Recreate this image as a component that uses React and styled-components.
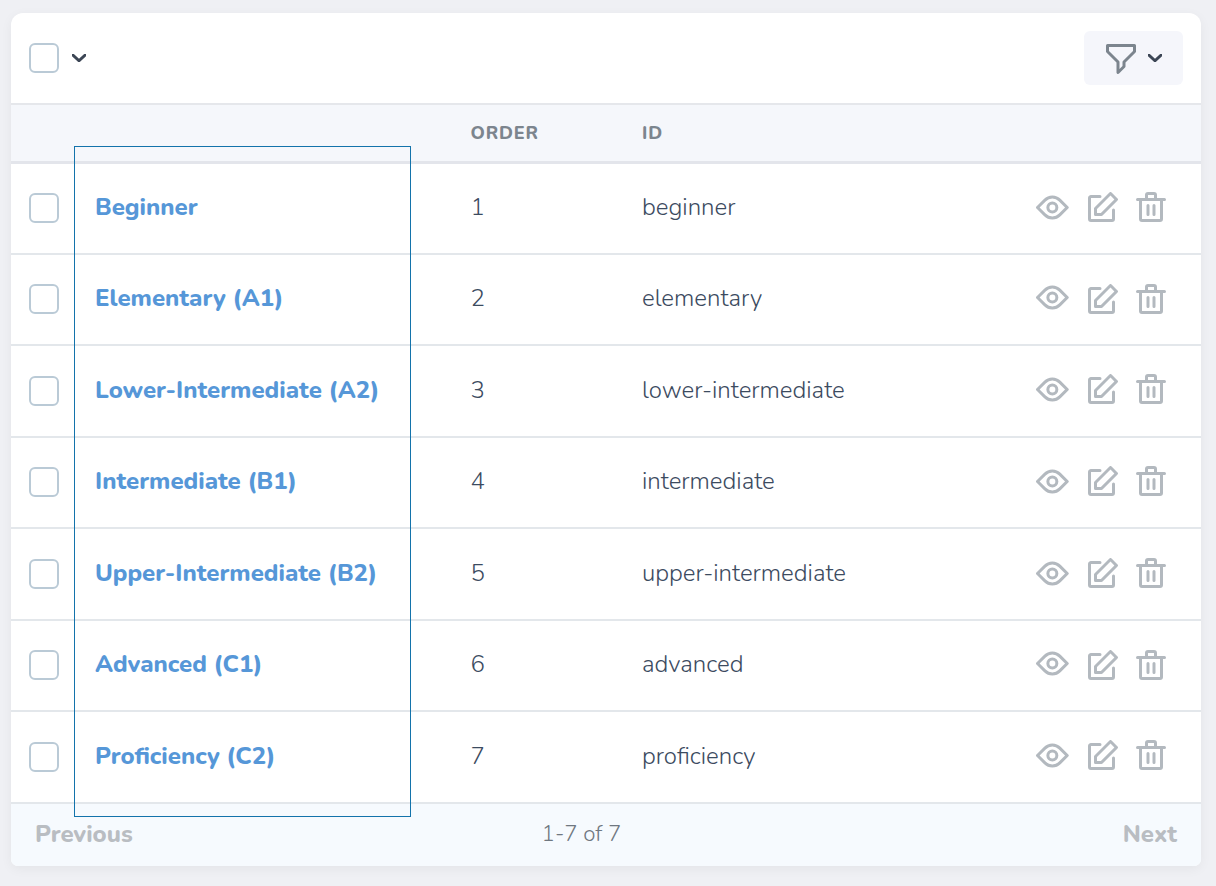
import React from "react";
import styled, { createGlobalStyle } from "styled-components";

const GlobalStyle = createGlobalStyle`
  *, *::before, *::after { box-sizing: border-box; }
  body {
    margin: 0;
    background: #eff0f4;
    font-family: Nunito, "Open Sans", sans-serif;
    font-size: 24px;
    font-weight: 300;
    color: #3c4b5f;
    overflow: hidden;
  }
`;

const Page = styled.main`
  position: relative;
  height: 886px;
  padding: 13px 15px 20px 11px;
`;

const Card = styled.section`
  display: flex;
  flex-direction: column;
  height: 853px;
  border-radius: 12px 12px 7px 7px;
  background: #fff;
  box-shadow: 0 3px 12px rgba(0, 0, 0, 0.05);
  overflow: hidden;
`;

const Toolbar = styled.header`
  display: flex;
  align-items: center;
  height: 90px;
  padding: 0 18px;
`;

const Checkbox = styled.span`
  flex: none;
  width: 30px;
  height: 30px;
  border: 2px solid #bacad6;
  border-radius: 6px;
  background: #fff;
`;

const Arrow = styled.svg`
  flex: none;
  width: 14px;
  height: 8px;
  margin-left: ${(p) => p.$gap}px;
  fill: #3c4655;
`;

const FilterButton = styled.button`
  display: flex;
  align-items: center;
  width: 99px;
  height: 54px;
  margin-left: auto;
  padding: 0 0 0 22px;
  border: 0;
  border-radius: 6px;
  background: #f5f6fb;
`;

const FilterGlyph = styled.svg`
  width: 30px;
  height: 30px;
  margin-top: 2px;
  fill: #7c858e;
`;

const columns = "84px 375.5px 171.5px 1fr auto";

const HeadRow = styled.div`
  display: grid;
  grid-template-columns: ${columns};
  align-items: center;
  height: 61px;
  border-top: 2px solid #e5e7eb;
  border-bottom: 3px solid #e3e5eb;
  background: #f5f7fb;
`;

const HeadCell = styled.span`
  grid-column: ${(p) => p.$column};
  font-size: 18px;
  font-weight: 800;
  letter-spacing: 0.8px;
  line-height: 24px;
  color: #7c858e;
`;

const Row = styled.div`
  display: grid;
  grid-template-columns: ${columns};
  align-items: start;
  height: ${(p) => p.$height}px;
  border-bottom: 2px solid #e3e7eb;
`;

const SelectCell = styled.div`
  display: flex;
  padding: ${(p) => p.$top}px 0 0 18px;
`;

const Cell = styled.div`
  padding-top: ${(p) => p.$top}px;
  line-height: 36px;
  white-space: nowrap;
`;

const NameCell = styled(Cell)`
  font-weight: 800;
  color: #5697d8;
`;

const Actions = styled.div`
  display: flex;
  align-items: flex-start;
  padding: ${(p) => p.$top}px 35px 0 0;
  fill: #b3b9bf;
`;

const EyeIcon = styled.svg`
  width: 33px;
  height: 25px;
  margin: ${(p) => p.$drop}px 19px 0 0;
`;

const ActionIcon = styled.svg`
  width: 30px;
  height: 30px;
  & + & { margin-left: 18px; }
`;

const Footer = styled.footer`
  display: grid;
  grid-template-columns: 1fr auto 1fr;
  align-items: center;
  flex: 1;
  padding: 0 24px 2px;
  background: #f6fafe;
`;

const PageLink = styled.span`
  font-weight: 800;
  line-height: 36px;
  color: #b9bdc2;
  text-align: ${(p) => p.$align};
`;

const Count = styled.span`
  font-size: 22.3px;
  line-height: 36px;
  color: #6f7780;
  margin-right: 49px;
`;

const Highlight = styled.div`
  position: absolute;
  left: 74px;
  top: 146px;
  width: 337px;
  height: 671px;
  border: 1px solid #1373ab;
  pointer-events: none;
`;

/* height: row height with its rule; text, box, icon: top offsets; drop: the eye's offset under the icons' top */
const levels = [
  { name: "Beginner", id: "beginner", height: 91, text: 25, box: 29, icon: 28, drop: 3 },
  { name: "Elementary (A1)", id: "elementary", height: 91, text: 25, box: 29, icon: 29, drop: 1 },
  { name: "Lower-Intermediate (A2)", id: "lower-intermediate", height: 92, text: 26, box: 30, icon: 28, drop: 3 },
  { name: "Intermediate (B1)", id: "intermediate", height: 91, text: 25, box: 29, icon: 28, drop: 3 },
  { name: "Upper-Intermediate (B2)", id: "upper-intermediate", height: 92, text: 26, box: 30, icon: 29, drop: 3 },
  { name: "Advanced (C1)", id: "advanced", height: 91, text: 25, box: 29, icon: 29, drop: 1 },
  { name: "Proficiency (C2)", id: "proficiency", height: 92, text: 26, box: 30, icon: 28, drop: 3 },
];

const ChevronDown = ({ gap }) => (
  <Arrow $gap={gap} viewBox="0.3 0.2 9.4 5.6" preserveAspectRatio="none">
    <path d="M8.293.293a1 1 0 0 1 1.414 1.414l-4 4a1 1 0 0 1-1.414 0l-4-4A1 1 0 0 1 1.707.293L5 3.586 8.293.293z" />
  </Arrow>
);

const Funnel = () => (
  <FilterGlyph viewBox="0 0 20 20">
    <path d="M.293 5.707A1 1 0 0 1 0 5V1a1 1 0 0 1 1-1h18a1 1 0 0 1 1 1v4a1 1 0 0 1-.293.707L13 12.413v2.585a1 1 0 0 1-.293.708l-4 4c-.63.629-1.707.183-1.707-.708v-6.585L.293 5.707zM2 2v2.585l6.707 6.707a1 1 0 0 1 .293.707v4.585l2-2V12a1 1 0 0 1 .293-.707L18 4.585V2H2z" />
  </FilterGlyph>
);

const Eye = ({ drop }) => (
  <EyeIcon $drop={drop} viewBox="0 0 22 16">
    <path d="M16.56 13.66a8 8 0 0 1-11.32 0L.3 8.7a1 1 0 0 1 0-1.42l4.95-4.95a8 8 0 0 1 11.32 0l4.95 4.95a1 1 0 0 1 0 1.42l-4.95 4.95-.01.01zm-9.9-1.42a6 6 0 0 0 8.48 0L19.38 8l-4.24-4.24a6 6 0 0 0-8.48 0L2.4 8l4.25 4.24h.01zM10.9 12a4 4 0 1 1 0-8 4 4 0 0 1 0 8zm0-2a2 2 0 1 0 0-4 2 2 0 0 0 0 4z" />
  </EyeIcon>
);

const Edit = () => (
  <ActionIcon viewBox="0 0 20 20">
    <path d="M4.3 10.3l10-10a1 1 0 0 1 1.4 0l4 4a1 1 0 0 1 0 1.4l-10 10a1 1 0 0 1-.7.3H5a1 1 0 0 1-1-1v-4a1 1 0 0 1 .3-.7zM6 14h2.59l9-9L15 2.41l-9 9V14zm10-2a1 1 0 0 1 2 0v6a2 2 0 0 1-2 2H2a2 2 0 0 1-2-2V4c0-1.1.9-2 2-2h6a1 1 0 1 1 0 2H2v14h14v-6z" />
  </ActionIcon>
);

const Trash = () => (
  <ActionIcon viewBox="0 0 20 20">
    <path d="M6 4V2a2 2 0 0 1 2-2h4a2 2 0 0 1 2 2v2h5a1 1 0 0 1 0 2h-1v12a2 2 0 0 1-2 2H4a2 2 0 0 1-2-2V6H1a1 1 0 1 1 0-2h5zM4 6v12h12V6H4zm8-2V2H8v2h4zM8 8a1 1 0 0 1 1 1v6a1 1 0 0 1-2 0V9a1 1 0 0 1 1-1zm4 0a1 1 0 0 1 1 1v6a1 1 0 0 1-2 0V9a1 1 0 0 1 1-1z" />
  </ActionIcon>
);

export default function App() {
  return (
    <Page>
      <GlobalStyle />
      <Card>
        <Toolbar>
          <Checkbox />
          <ChevronDown gap={13} />
          <FilterButton>
            <Funnel />
            <ChevronDown gap={12} />
          </FilterButton>
        </Toolbar>
        <HeadRow>
          <HeadCell $column={3}>ORDER</HeadCell>
          <HeadCell $column={4}>ID</HeadCell>
        </HeadRow>
        {levels.map((level, index) => (
          <Row key={level.id} $height={level.height}>
            <SelectCell $top={level.box}>
              <Checkbox />
            </SelectCell>
            <NameCell $top={level.text}>{level.name}</NameCell>
            <Cell $top={level.text}>{index + 1}</Cell>
            <Cell $top={level.text}>{level.id}</Cell>
            <Actions $top={level.icon}>
              <Eye drop={level.drop} />
              <Edit />
              <Trash />
            </Actions>
          </Row>
        ))}
        <Footer>
          <PageLink $align="left">Previous</PageLink>
          <Count>1-7 of 7</Count>
          <PageLink $align="right">Next</PageLink>
        </Footer>
      </Card>
      <Highlight />
    </Page>
  );
}
